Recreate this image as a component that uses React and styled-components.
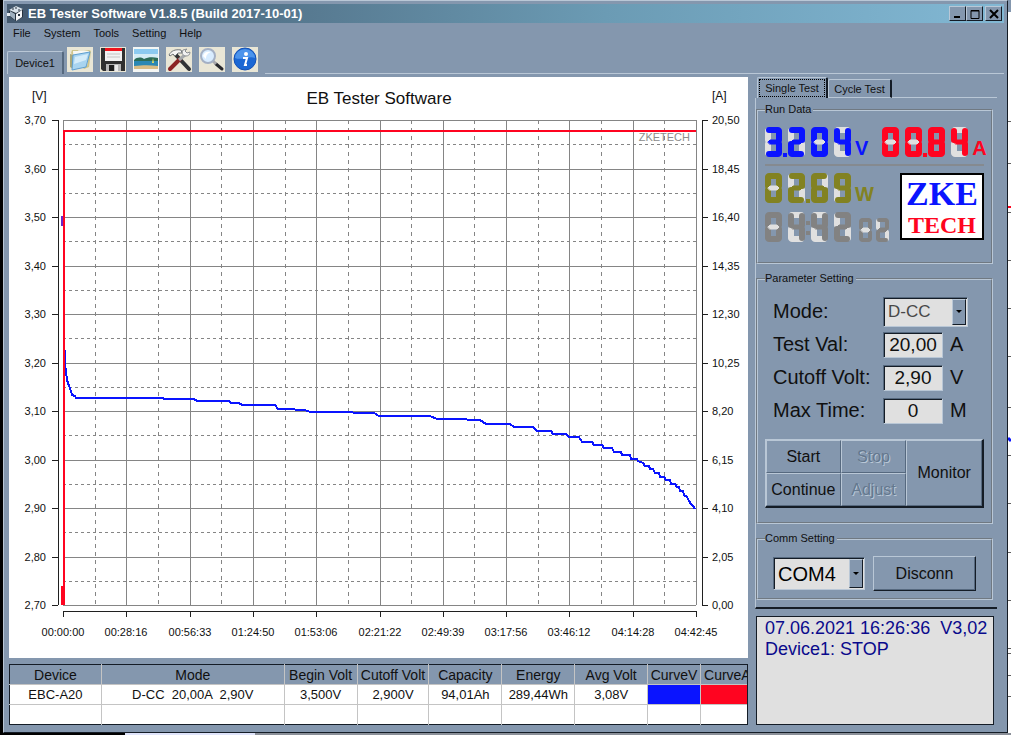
import React from 'react'
import styled, { createGlobalStyle } from 'styled-components'

const face = '#8497ae'
const light = '#b9c7d6'
const shade = '#56697f'
const dark = '#141c26'
const blue = '#0a14ff'
const red = '#ff0420'

const GlobalStyle = createGlobalStyle`
    * {
        box-sizing: border-box;
    }

    body {
        margin: 0;
        background-color: #000000;
        font-family: "Liberation Sans", Arial, sans-serif;
        font-size: 11px;
        color: #101010;
    }

    button, input, select {
        font-family: inherit;
        color: inherit;
    }
`

const columns = [
    { title: 'Device', value: 'EBC-A20', width: 92 },
    { title: 'Mode', value: 'D-CC  20,00A  2,90V', width: 183 },
    { title: 'Begin Volt', value: '3,500V', width: 73 },
    { title: 'Cutoff Volt', value: '2,900V', width: 72 },
    { title: 'Capacity', value: '94,01Ah', width: 73 },
    { title: 'Energy', value: '289,44Wh', width: 73 },
    { title: 'Avg Volt', value: '3,08V', width: 73 },
    { title: 'CurveV', color: blue, width: 53 },
    { title: 'CurveA', color: red, width: 47, cut: true },
]

const voltTicks = ['3,70', '3,60', '3,50', '3,40', '3,30', '3,20', '3,10', '3,00', '2,90', '2,80', '2,70']
const ampTicks = ['20,50', '18,45', '16,40', '14,35', '12,30', '10,25', '8,20', '6,15', '4,10', '2,05', '0,00']
const timeTicks = ['00:00:00', '00:28:16', '00:56:33', '01:24:50', '01:53:06', '02:21:22', '02:49:39', '03:17:56', '03:46:12', '04:14:28', '04:42:45']

// plot area inside the 739 x 581 chart
const plot = { left: 54, right: 687, top: 43, bottom: 528 }

const voltCurve = `55,259 56,286 57,295 58,303 60,309 62,314 63,318 66,319 67,321 152,321 157,322
    185,322 188,324 220,324 222,326 230,326 233,328 266,328 269,332 285,332 287,333 296,333 301,335
    343,335 345,336 365,336 370,339 421,339 428,342 457,342 459,343 471,343 477,347 501,347 505,350
    524,350 528,354 542,354 544,357 557,357 560,360 570,360 573,365 583,365 585,368 593,368 595,371
    603,371 605,375 612,375 613,378 621,378 622,382 628,382 629,384 634,386 636,389 640,389 641,392
    644,392 646,396 650,396 651,400 655,400 657,403 661,403 662,407 666,407 668,410 670,410 671,414
    674,414 675,418 678,420 680,424 682,427 684,429 686,432`

const at = (start, end, i) => Math.round(start + (end - start) * i / 10)
const half = (start, end, i) => Math.round(start + (end - start) * (i + 0.5) / 10)

const Chart = () => (
    <ChartSvg viewBox="0 0 739 581" role="img" aria-label="EB Tester Software">
        <text x="370" y="27" fontSize="17" textAnchor="middle">EB Tester Software</text>
        <text x="23" y="23" fontSize="12">[V]</text>
        <text x="703" y="23" fontSize="12">[A]</text>

        <g stroke="#858585" fill="none" shapeRendering="crispEdges">
            {voltTicks.slice(1).map((t, i) => (
                <g key={t}>
                    <path strokeDasharray="3 3" d={`M${plot.left} ${half(plot.top, plot.bottom, i)}H${plot.right}`} />
                    <path strokeDasharray="4 4" d={`M${half(plot.left, plot.right, i)} ${plot.top}V${plot.bottom}`} />
                </g>
            ))}
            {voltTicks.map((t, i) => (
                <g key={t}>
                    <path d={`M${plot.left} ${at(plot.top, plot.bottom, i)}H${plot.right}`} />
                    <path d={`M${at(plot.left, plot.right, i)} ${plot.top}V${plot.bottom}`} />
                </g>
            ))}
        </g>

        <g stroke="#202020" fill="none" shapeRendering="crispEdges">
            <path d="M49 43V528 M693 43V528 M54 534H687" />
            {voltTicks.map((t, i) => (
                <path
                    key={t}
                    d={`M43 ${at(plot.top, plot.bottom, i)}h6 M693 ${at(plot.top, plot.bottom, i)}h6 M${at(plot.left, plot.right, i)} 534v6`}
                />
            ))}
        </g>

        {voltTicks.map((t, i) => <text key={t} x="37" y={at(plot.top, plot.bottom, i) + 4} textAnchor="end">{t}</text>)}
        {ampTicks.map((t, i) => <text key={t} x="703" y={at(plot.top, plot.bottom, i) + 4}>{t}</text>)}
        {timeTicks.map((t, i) => <text key={t} x={at(plot.left, plot.right, i)} y="559" textAnchor="middle">{t}</text>)}
        <text x="681" y="64" fontSize="11" fill="#8c8c8c" textAnchor="end">ZKETECH</text>

        <path d="M53 139V149" stroke="#6a28c8" strokeWidth="2" fill="none" />
        <polyline points={voltCurve} stroke={blue} strokeWidth="2" fill="none" shapeRendering="crispEdges" />
        <path d="M55 528V54H687" stroke={red} strokeWidth="2" fill="none" />
        <path d="M53 509V528" stroke={red} strokeWidth="2" fill="none" />
    </ChartSvg>
)

// segments: top, top right, bottom right, bottom, bottom left, top left, middle
const lit = {
    0: '1111110',
    2: '1101101',
    3: '1111001',
    4: '0110011',
    6: '1011111',
    8: '1111111',
    9: '1111011',
}

const Digit = ({ value, color, w = 17, h = 30, x = 0, y = 0 }) => {
    const t = w > 14 ? 6 : 4
    const l = t / 2
    const r = w - t / 2
    const b = h - t / 2
    const m = h / 2
    const lines = [
        `M${l + 1} ${l}H${r - 1}`,
        `M${r} ${l + 1}V${m - 2}`,
        `M${r} ${m + 2}V${b - 1}`,
        `M${l + 1} ${b}H${r - 1}`,
        `M${l} ${m + 2}V${b - 1}`,
        `M${l} ${l + 1}V${m - 2}`,
    ]
    const middle = `M${l} ${m}l2 -2H${r - 2}l2 2l-2 2H${l + 2}z`
    const isLit = (i) => lit[value][i] === '1'

    return (
        <g transform={`translate(${x} ${y})`} strokeWidth={t} strokeLinecap="round" fill="none">
            {lines.map((d, i) => !isLit(i) && <path key={d} d={d} stroke="#e0e0e0" />)}
            {lines.map((d, i) => isLit(i) && <path key={d} d={d} stroke={color} />)}
            <path d={middle} strokeWidth="1" stroke={isLit(6) ? color : '#e0e0e0'} fill={isLit(6) ? color : '#e0e0e0'} />
        </g>
    )
}

const Reading = ({ digits, dot, unit, color }) => (
    <ReadingBox $color={color}>
        <svg width="86" height="30" role="img" aria-label={digits}>
            {digits.split('').map((d, i) => <Digit key={i} value={d} color={color} x={i * 23} />)}
            <rect x={dot * 23 - 5} y="26" width="4" height="4" fill={color} />
        </svg>
        <Unit>{unit}</Unit>
    </ReadingBox>
)

const Timer = () => (
    <svg width="125" height="30" role="img" aria-label="04:42:02">
        {'0442'.split('').map((d, i) => <Digit key={i} value={d} color="#828282" x={i * 23} />)}
        <path d="M41 9h4v4h-4z M41 19h4v4h-4z" fill="#828282" />
        <Digit value="0" color="#828282" w={13} h={24} x={94} y={6} />
        <Digit value="2" color="#828282" w={13} h={24} x={111} y={6} />
    </svg>
)

const AppIcon = () => (
    <svg width="18" height="17" viewBox="0 0 18 17">
        <path d="M2 5L9 1l7 3v8l-7 4-7-5z" fill="#26323e" />
        <path d="M2 5l7-4 7 3-7 4z" fill="#d8e2ea" />
        <path d="M3 6l5 3v6l-5-4z" fill="#9fb0bf" />
        <path d="M9 9l6-4v7l-6 4z" fill="#f4f6f8" />
        <path d="M0 8h3v3H0z" fill="#e4eaf0" />
        <path d="M5 4h2M8 3h2M11 5h2" stroke="#26323e" fill="none" />
        <path d="M11 9h2v2h-2z" fill="#26323e" />
    </svg>
)

const FolderIcon = () => (
    <svg width="26" height="25" viewBox="0 0 26 25">
        <path d="M4 6l1-3h6l1 2 10-2 2 1-2 16-5 2z" fill="#cfc58c" />
        <path d="M6 4l16 0-2 15H7z" fill="#f7f8f4" />
        <path d="M3 7l4 1-1 14-3-2z" fill="#a9a77a" />
        <path d="M6 8l17-3-4 15-14 3z" fill="#a8d4f0" />
        <path d="M8 10l13-3-2 6-12 4z" fill="#d4ecfa" />
        <path d="M6 8l17-3-4 15-14 3z" fill="none" stroke="#5f9fd0" />
    </svg>
)

const DiskIcon = () => (
    <svg width="26" height="25" viewBox="0 0 26 25">
        <path d="M1 1h24v23H3l-2-2z" fill="#303030" />
        <path d="M5 1h17v13H5z" fill="#f2f2f2" />
        <path d="M5 1h17v3H5z" fill="#f0141c" />
        <path d="M7 7h13M7 10h13" stroke="#c4c4c4" />
        <path d="M6 17h15v7H6z" fill="#b8b8b8" />
        <path d="M9 18h5v6H9z" fill="#202020" />
        <path d="M15 18h3v6h-3z" fill="#ececec" />
    </svg>
)

const PhotoIcon = () => (
    <svg width="26" height="25" viewBox="0 0 26 25">
        <path d="M0 0h26v25H0z" fill="#f4f6f4" />
        <path d="M1 2h24v10H1z" fill="#8ccaf0" />
        <path d="M1 7h24v5H1z" fill="#d4ecf6" />
        <path d="M1 13c3-3 7-3 10-1 4-2 9-2 14-1v4H1z" fill="#2c6c58" />
        <path d="M1 14h24v5H1z" fill="#2a88b4" />
        <path d="M1 19c9-1 16-1 24 0v3H1z" fill="#d8bc84" />
        <path d="M20 11l-1 5h2z" fill="#e8e060" />
    </svg>
)

const ToolsIcon = () => (
    <svg width="26" height="25" viewBox="0 0 26 25">
        <path d="M9 7l14 15" stroke="#303234" strokeWidth="4" strokeLinecap="round" />
        <path d="M4 22L14 12" stroke="#8c2424" strokeWidth="4" strokeLinecap="round" />
        <path d="M13 13l7-6" stroke="#a4a8ac" strokeWidth="3" />
        <path d="M17 3c-2 3 0 6 3 6 2 0 4-1 4-4l-3 1-2-2 2-2z" fill="#f2f2f2" stroke="#8c9094" />
        <path d="M3 8c2-4 6-6 12-5l1 3-4 0-3 3-2-2-3 2z" fill="#f6f6f6" stroke="#70767a" />
    </svg>
)

const SearchIcon = () => (
    <svg width="26" height="25" viewBox="0 0 26 25">
        <path d="M17 17l6 5" stroke="#28282c" strokeWidth="3" strokeLinecap="round" />
        <path d="M13 13l4 4" stroke="#a8a8ac" strokeWidth="3" />
        <circle cx="9" cy="9" r="7" fill="#d8ecff" stroke="#a4b0c4" strokeWidth="2" />
        <path d="M4 9c1-4 4-5 8-4-3 1-5 3-5 7z" fill="#ffffff" />
    </svg>
)

const InfoIcon = () => (
    <svg width="26" height="25" viewBox="0 0 26 25">
        <circle cx="13" cy="12" r="11" fill="#1c68d4" stroke="#1450b4" />
        <path d="M3 11a10 9 0 0 1 20 0c-6-3-13 3-20 0z" fill="#4c94ec" />
        <circle cx="14" cy="7" r="2" fill="#ffffff" />
        <path d="M11 11h4l-2 7h2" fill="none" stroke="#ffffff" strokeWidth="2" />
    </svg>
)

const tools = [
    ['Open', FolderIcon],
    ['Save', DiskIcon],
    ['Picture', PhotoIcon],
    ['Setup', ToolsIcon],
    ['Zoom', SearchIcon],
    ['About', InfoIcon],
]

const Combo = ({ id, label, value, width, height, size, muted }) => (
    <ComboBox $width={width} $height={height}>
        <ComboSelect id={id} aria-label={label} defaultValue={value} $size={size} $muted={muted}>
            <option>{value}</option>
        </ComboSelect>
        <ComboArrow>
            <svg width="6" height="3"><path d="M0 0h6L3 3z" fill="#000000" /></svg>
        </ComboArrow>
    </ComboBox>
)

const NumberRow = ({ id, label, value, unit }) => (
    <Row>
        <Label htmlFor={id}>{label}</Label>
        <NumberInput id={id} defaultValue={value} />
        <RowUnit>{unit}</RowUnit>
    </Row>
)

const App = () => {
    return (
        <Desktop>
            <GlobalStyle />
            <Window>
                <TitleBar>
                    <AppIcon />
                    <Title>EB Tester Software V1.8.5 (Build 2017-10-01)</Title>
                    <Caption aria-label="Minimize"><svg width="12" height="10"><path d="M2 8h6" stroke="#000000" strokeWidth="2" /></svg></Caption>
                    <Caption aria-label="Maximize"><svg width="12" height="10"><path d="M2 1.500h8v8h-8zM2 2h8" stroke="#000000" fill="none" /></svg></Caption>
                    <Caption aria-label="Close" $apart><svg width="12" height="10"><path d="M2 1l8 8M10 1l-8 8" stroke="#000000" strokeWidth="2" /></svg></Caption>
                </TitleBar>

                <Menu>
                    {['File', 'System', 'Tools', 'Setting', 'Help'].map((item) => <MenuItem key={item}>{item}</MenuItem>)}
                </Menu>

                <Toolbar>
                    <DeviceTab>Device1</DeviceTab>
                    <Tools>
                        {tools.map(([name, Icon]) => <Tool key={name} aria-label={name}><Icon /></Tool>)}
                    </Tools>
                    <ToolbarLine />
                </Toolbar>

                <Main>
                    <Left>
                        <Chart />
                        <Table>
                            <colgroup>
                                {columns.map((c) => <Col key={c.title} $width={c.width} />)}
                            </colgroup>
                            <thead>
                                <tr>{columns.map((c) => <Th key={c.title} $cut={c.cut}>{c.title}</Th>)}</tr>
                            </thead>
                            <tbody>
                                <tr>{columns.map((c) => <Td key={c.title} $color={c.color}>{c.value}</Td>)}</tr>
                                <tr>{columns.map((c) => <Td key={c.title} />)}</tr>
                            </tbody>
                        </Table>
                    </Left>

                    <Side>
                        <Tabs>
                            <Tab $active><span>Single Test</span></Tab>
                            <Tab><span>Cycle Test</span></Tab>
                            <TabsLine />
                        </Tabs>
                        <Panel>
                            <Group>
                                <Legend>Run Data</Legend>
                                <ReadingRow>
                                    <Reading digits="3204" dot={1} unit="V" color={blue} />
                                    <Reading digits="0084" dot={2} unit="A" color={red} />
                                </ReadingRow>
                                <Divider />
                                <Lower>
                                    <LowerReadings>
                                        <Reading digits="0269" dot={2} unit="W" color="#828222" />
                                        <Timer />
                                    </LowerReadings>
                                    <Logo>
                                        <LogoTop>ZKE</LogoTop>
                                        <LogoBottom>TECH</LogoBottom>
                                    </Logo>
                                </Lower>
                            </Group>

                            <Group $tight>
                                <Legend>Parameter Setting</Legend>
                                <Row>
                                    <Label htmlFor="mode">Mode:</Label>
                                    <Combo id="mode" value="D-CC" width={85} height={30} size={17} muted />
                                </Row>
                                <NumberRow id="test" label="Test Val:" value="20,00" unit="A" />
                                <NumberRow id="cutoff" label="Cutoff Volt:" value="2,90" unit="V" />
                                <NumberRow id="max" label="Max Time:" value="0" unit="M" />
                                <Buttons>
                                    <Button>Start</Button>
                                    <Button disabled>Stop</Button>
                                    <Button $tall>Monitor</Button>
                                    <Button>Continue</Button>
                                    <Button disabled>Adjust</Button>
                                </Buttons>
                            </Group>

                            <Group $short>
                                <Legend>Comm Setting</Legend>
                                <CommRow>
                                    <Combo id="port" label="Port" value="COM4" width={92} height={33} size={20} />
                                    <Connect>Disconn</Connect>
                                </CommRow>
                            </Group>
                        </Panel>
                        <Log>{'07.06.2021 16:26:36  V3,02\nDevice1: STOP'}</Log>
                    </Side>
                </Main>
            </Window>
            <Behind preserveAspectRatio="none" viewBox="0 0 3 733">
                <path d="M0 0h3v12h-3z" fill={face} />
                <path d="M0 121.500h3M0 163.500h3M0 212.500h3M0 260.500h3M0 308.500h3M0 356.500h3M0 407.500h3M0 455.500h3M0 503.500h3M0 552.500h3M0 600.500h3M0 648.500h3M0 653.500h3M0 675.500h3M0 696.500h3" stroke="#606060" />
                <path d="M0 207h3" stroke={red} strokeWidth="2" />
                <path d="M0 438l3 3" stroke={blue} strokeWidth="3" />
            </Behind>
            <Floor />
        </Desktop>
    )
}

export default App


const Desktop = styled.div`
    min-height: 100vh;
    padding-left: 3px;

    display: grid;
    grid-template-columns: minmax(0, 1fr) 3px;
    grid-template-rows: auto 1fr;
`

const Window = styled.div`
    padding: 3px;

    background-color: ${face};
    border: 1px solid ${dark};
    border-top-color: ${light};
    border-left-color: ${light};
`

const Behind = styled.svg`
    width: 3px;
    height: 100%;
    background-color: #ffffff;
`

const Floor = styled.div`
    grid-column: 1 / -1;
    background: linear-gradient(to right, #000000 122px, #dfe4fa 122px, #dfe4fa 252px, #8a8f98 252px);
`

const TitleBar = styled.div`
    height: 19px;
    padding-right: 2px;

    display: flex;
    align-items: center;

    background: linear-gradient(to right, #43586d, #6b9bb4 60%, #82b8d4);
`

const Title = styled.div`
    flex: 1;
    margin-left: 3px;

    font-size: 13px;
    font-weight: bold;
    white-space: nowrap;
    color: #ffffff;
`

const Caption = styled.button`
    width: 17px;
    height: 15px;
    padding: 0;
    margin-left: ${props => props.$apart ? "2px" : "0"};

    display: flex;
    align-items: center;
    justify-content: center;

    background-color: ${face};
    border: 1px solid ${dark};
    border-top-color: ${light};
    border-left-color: ${light};
`

const Menu = styled.nav`
    height: 20px;
    padding-left: 6px;

    display: flex;
    align-items: center;
    gap: 13px;
`

const MenuItem = styled.button`
    padding: 0;

    border: none;
    background: none;
    font-size: 11px;
`

const Toolbar = styled.div`
    height: 31px;

    display: flex;
    align-items: flex-end;
`

const DeviceTab = styled.button`
    width: 57px;
    height: 23px;
    padding: 0;

    background-color: ${face};
    border: 1px solid ${light};
    border-right: 2px solid ${shade};
    border-bottom: none;
    border-radius: 2px 2px 0 0;
    font-size: 11px;
`

const Tools = styled.div`
    padding: 0 7px 2px 3px;

    display: flex;
    gap: 7px;
`

const Tool = styled.button`
    width: 26px;
    height: 25px;
    padding: 0;

    display: flex;

    border: none;
    background-color: #e9e6d6;
`

const ToolbarLine = styled.div`
    flex: 1;
    border-bottom: 1px solid ${light};
`

const Main = styled.div`
    padding: 3px 7px 4px 2px;

    display: grid;
    grid-template-columns: minmax(0, 1fr) 242px;
    gap: 7px;
`

const Left = styled.div`
    display: flex;
    flex-direction: column;
    gap: 6px;
`

const ChartSvg = styled.svg`
    width: 100%;
    display: block;

    background-color: #ffffff;
    font-size: 11px;
    fill: #101010;
`

const Table = styled.table`
    width: 100%;

    table-layout: fixed;
    border-collapse: collapse;
    border: 1px solid ${dark};
    background-color: #ffffff;
`

const Col = styled.col`
    width: ${props => props.$width / 7.39}%;
`

const Th = styled.th`
    height: 20px;
    padding: 0 0 0 ${props => props.$cut ? "3px" : "0"};
    overflow: hidden;

    background-color: ${face};
    border-right: 1px solid ${props => props.$cut ? dark : "#c4c4c4"};
    font-size: 14px;
    font-weight: normal;
    line-height: 18px;
    text-align: ${props => props.$cut ? "left" : "center"};
    white-space: nowrap;
`

const Td = styled.td`
    height: 20px;
    padding: 0;

    background-color: ${props => props.$color || "#ffffff"};
    border-right: 1px solid #c4c4c4;
    border-top: 1px solid #c4c4c4;
    font-size: 13px;
    line-height: 18px;
    text-align: center;
    white-space: pre;

    &:last-child {
        border-right-color: ${dark};
    }
`

const Side = styled.div`
    display: flex;
    flex-direction: column;
`

const Tabs = styled.div`
    height: 21px;
    padding-left: 2px;

    display: flex;
    align-items: flex-end;
`

const Tab = styled.button`
    width: ${props => props.$active ? "71px" : "64px"};
    height: ${props => props.$active ? "21px" : "19px"};
    padding: 1px;

    background-color: ${face};
    border: 1px solid ${light};
    border-right: 2px solid ${dark};
    border-bottom: ${props => props.$active ? "none" : `1px solid ${light}`};
    border-radius: 2px 2px 0 0;
    font-size: 11px;

    span {
        height: 100%;

        display: flex;
        align-items: center;
        justify-content: center;

        border: ${props => props.$active ? "1px dotted #000000" : "none"};
    }
`

const TabsLine = styled.div`
    flex: 1;
    border-bottom: 1px solid ${light};
`

const Panel = styled.div`
    padding: 5px 4px 7px 0;

    display: flex;
    flex-direction: column;
    gap: 8px;

    border-left: 1px solid ${light};
    border-bottom: 2px solid ${dark};
`

const Group = styled.fieldset`
    min-width: 0;
    margin: 0;
    padding: ${props => props.$tight ? "10px" : "11px"} 7px ${props => props.$short ? "7px" : "14px"};

    border: 2px groove ${light};
`

const Legend = styled.legend`
    padding: 0 2px 0 0;

    font-size: 11px;
    line-height: 13px;
`

const ReadingRow = styled.div`
    display: flex;
    gap: 14px;
`

const ReadingBox = styled.div`
    display: flex;
    align-items: flex-end;
    gap: 4px;

    color: ${props => props.$color};
`

const Unit = styled.span`
    font-size: 20px;
    font-weight: bold;
    line-height: 18px;
`

const Divider = styled.div`
    margin: 7px 0;
    border-top: 2px solid #858a90;
`

const Lower = styled.div`
    padding-bottom: 6px;

    display: flex;
    justify-content: space-between;
`

const LowerReadings = styled.div`
    display: flex;
    flex-direction: column;
    gap: 9px;
`

const Logo = styled.div`
    width: 84px;
    height: 67px;

    display: flex;
    flex-direction: column;
    align-items: center;
    justify-content: center;

    background-color: #ffffff;
    border: 2px solid #000000;
    font-family: "Liberation Serif", serif;
    font-weight: bold;
`

const LogoTop = styled.span`
    color: ${blue};
    font-size: 34px;
    line-height: 36px;
`

const LogoBottom = styled.span`
    color: ${red};
    font-size: 24px;
    line-height: 26px;
`

const Row = styled.div`
    height: 33px;
    padding-left: 8px;

    display: flex;
    align-items: center;
`

const Label = styled.label`
    width: 110px;
    font-size: 20px;
    white-space: nowrap;
`

const sunken = `
    border: 1px solid ${light};
    border-top-color: ${shade};
    border-left-color: ${shade};
    box-shadow: inset 1px 1px 0 ${dark};
    background-color: #e0e0e0;
`

const NumberInput = styled.input`
    width: 60px;
    height: 26px;
    padding: 0;

    ${sunken}
    font-size: 19px;
    text-align: center;
`

const RowUnit = styled.span`
    margin-left: 7px;
    font-size: 20px;
`

const ComboBox = styled.div`
    width: ${props => props.$width}px;
    height: ${props => props.$height}px;
    padding: 1px;

    display: flex;

    ${sunken}
`

const ComboSelect = styled.select`
    min-width: 0;
    padding: 0 0 0 3px;
    flex: 1;

    appearance: none;
    border: none;
    background: none;
    font-size: ${props => props.$size}px;
    color: ${props => props.$muted ? "#484848" : "#000000"};
`

const ComboArrow = styled.span`
    width: 14px;

    display: flex;
    align-items: center;
    justify-content: center;

    background-color: ${face};
    border: 1px solid ${dark};
    border-top-color: ${light};
    border-left-color: ${light};
`

const Buttons = styled.div`
    margin-top: 12px;

    display: grid;
    grid-template-columns: 76fr 67fr 77fr;
    grid-auto-rows: 33px;

    border: 1px solid ${light};
    border-right: 2px solid ${dark};
    border-bottom: 2px solid ${dark};
`

const Button = styled.button`
    grid-row: ${props => props.$tall ? "span 2" : "auto"};
    padding: 0;

    background-color: ${face};
    border: 1px solid ${shade};
    border-top-color: ${light};
    border-left-color: ${light};
    font-size: 16px;

    &:disabled {
        color: #64788e;
        text-shadow: 1px 1px 0 ${light};
    }
`

const CommRow = styled.div`
    padding: 0 8px;

    display: flex;
    align-items: center;
    justify-content: space-between;
`

const Connect = styled.button`
    width: 103px;
    height: 35px;
    padding: 0;

    background-color: ${face};
    border: 1px solid ${dark};
    border-top-color: ${light};
    border-left-color: ${light};
    box-shadow: inset -1px -1px 0 ${shade};
    font-size: 16px;
`

const Log = styled.pre`
    flex: 1;
    margin: 7px 3px 0 1px;
    padding: 1px 8px;
    overflow: hidden;

    background-color: #e0e0e0;
    border: 1px solid ${dark};
    color: #0a0a8c;
    font-family: "Liberation Sans", Arial, sans-serif;
    font-size: 18px;
    line-height: 21px;
`
